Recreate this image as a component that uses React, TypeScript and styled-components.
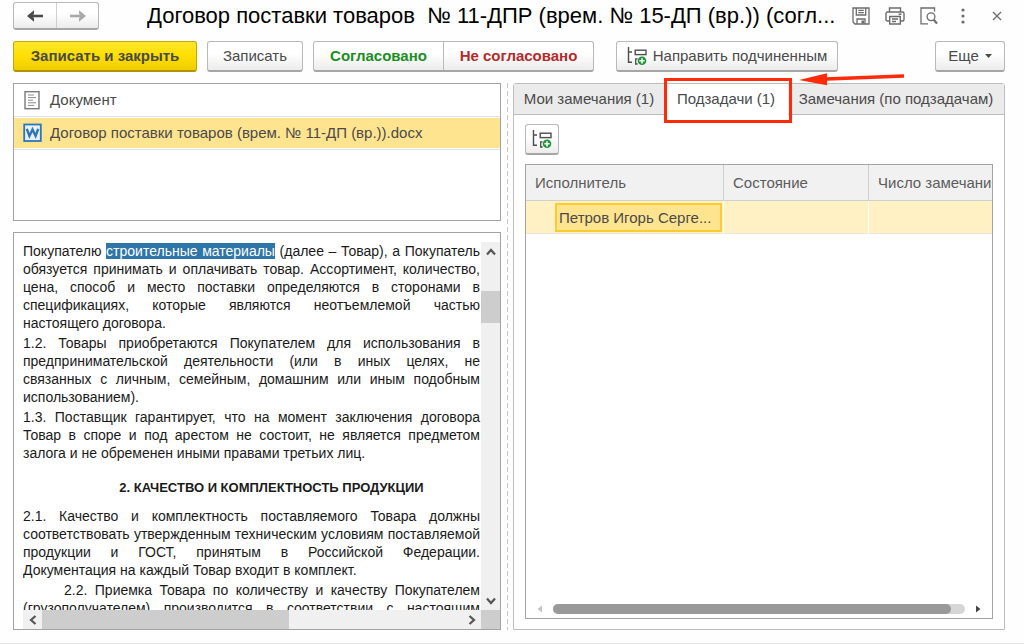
import React from "react";
import styled, { createGlobalStyle, css } from "styled-components";

const GlobalStyle = createGlobalStyle`
  *, *::before, *::after { box-sizing: border-box; }
  body { margin: 0; background: #fff; }
  button { font: inherit; color: inherit; margin: 0; padding: 0; }
`;

const Page = styled.main`
  display: flex;
  flex-direction: column;
  height: 100vh;
  border-bottom: 1px solid #e4e4e4;
  background: #fefefe;
  color: #4a4a4a;
  font-family: "Liberation Sans", Arial, sans-serif;
  font-size: 15px;
  line-height: 20px;
`;

const TitleBar = styled.header`
  display: flex;
  align-items: center;
  height: 34px;
  padding: 0 17px 2px 13px;
`;

const raised = css`
  border: 1px solid #b9b9b9;
  border-bottom: 2px solid #a6a6a6;
  border-radius: 3px;
  background: linear-gradient(#ffffff 40%, #ececec);
`;

const ButtonGroup = styled.div`
  display: flex;
  flex: none;
  ${raised}
`;

const NavButton = styled.button<{ $muted?: boolean }>`
  display: flex;
  align-items: center;
  justify-content: center;
  width: 42px;
  height: 25px;
  border: 0;
  background: none;
  color: ${(p) => (p.$muted ? "#a9a9a9" : "#4a4a4a")};
  & + & { border-left: 1px solid #cfcfcf; }
`;

const Title = styled.h1`
  flex: 1;
  min-width: 0;
  margin: 0 0 0 48px;
  overflow: hidden;
  color: #000;
  font-size: 22px;
  font-weight: 400;
  line-height: 30px;
  white-space: pre;
`;

const TitleTools = styled.div`
  display: flex;
  align-items: center;
  gap: 14px;
`;

const IconButton = styled.button`
  display: flex;
  align-items: center;
  justify-content: center;
  width: 20px;
  height: 20px;
  border: 0;
  background: none;
  color: #6c6c6c;
`;

const Toolbar = styled.div`
  display: flex;
  align-items: center;
  margin-top: 7px;
  padding: 0 19px 0 13px;
`;

const Button = styled.button<{ $width: number; $primary?: boolean; $before?: number }>`
  display: flex;
  flex: none;
  align-items: center;
  justify-content: center;
  gap: 6px;
  width: ${(p) => p.$width}px;
  height: 31px;
  margin-left: ${(p) => p.$before ?? 0}px;
  white-space: nowrap;
  ${raised}
  ${(p) =>
    p.$primary &&
    css`
      border-color: #c9a800;
      border-bottom-color: #b09400;
      background: linear-gradient(#ffe62e, #ffdf00 50%, #efcd00);
      font-weight: 700;
    `}
`;

const Verdicts = styled(ButtonGroup)`
  margin-left: 10px;
`;

const VerdictButton = styled.button<{ $tone: string; $width: number }>`
  width: ${(p) => p.$width}px;
  height: 28px;
  border: 0;
  background: none;
  color: ${(p) => p.$tone};
  font-weight: 700;
  & + & { border-left: 1px solid #b9b9b9; }
`;

const Spacer = styled.div`
  flex: 1;
`;

const Workspace = styled.div`
  display: grid;
  flex: 1;
  grid-template-columns: minmax(0, 488fr) 12px minmax(0, 492fr);
  min-height: 0;
  margin: 11px 19px 13px 13px;
`;

const LeftColumn = styled.div`
  display: flex;
  flex-direction: column;
  gap: 11px;
  min-height: 0;
`;

const Splitter = styled.div`
  justify-self: center;
  width: 1px;
  background: repeating-linear-gradient(#c8c8c8 0 5px, transparent 5px 8px);
`;

const Files = styled.ul`
  flex: none;
  height: 138px;
  margin: 0;
  padding: 0;
  border: 1px solid #a3a3a3;
  background: #fff;
  list-style: none;
`;

const FileRow = styled.li<{ $selected?: boolean }>`
  display: flex;
  align-items: center;
  gap: 7px;
  height: 33px;
  padding: 0 9px;
  border-bottom: 1px solid #e2e2e2;
  background: ${(p) => (p.$selected ? "#ffe48f" : "#fff")};
  box-shadow: inset 0 1px #fff, inset 0 -1px #fff;
`;

const FileIcon = styled.svg`
  flex: none;
  width: 20px;
  height: 20px;
`;

const Viewer = styled.section`
  display: grid;
  flex: 1;
  grid-template-columns: minmax(0, 1fr) 19px;
  grid-template-rows: minmax(0, 1fr) 19px;
  min-height: 0;
  padding: 9px 0 0 9px;
  border: 1px solid #a3a3a3;
  background: #fff;
`;

const DocText = styled.article`
  overflow: hidden;
  padding-right: 1px;
  color: #1a1a1a;
  font-size: 14px;
  line-height: 18px;
`;

const Paragraph = styled.p<{ $indent?: boolean }>`
  margin: 0 0 2px;
  text-align: justify;
  text-indent: ${(p) => (p.$indent ? 41 : 0)}px;
`;

const Line = styled.span`
  display: block;
  text-align-last: justify;
`;

const DocHeading = styled.h2`
  margin: 17px 0 10px;
  padding-left: 40px;
  font-size: 13px;
  line-height: 18px;
  text-align: center;
`;

const Mark = styled.mark`
  background: #2e75a8;
  color: #fff;
`;

const VTrack = styled.div`
  display: flex;
  flex-direction: column;
  background: #f0f0f0;
`;

const HTrack = styled.div`
  display: flex;
  background: #f0f0f0;
`;

const TrackButton = styled.button`
  display: flex;
  flex: none;
  align-items: center;
  justify-content: center;
  width: 19px;
  height: 19px;
  border: 0;
  background: none;
  color: #555;
`;

const VThumb = styled.div`
  height: 32px;
  margin-top: 30px;
  background: #cdcdcd;
`;

const HThumb = styled.div`
  flex: 0 0 54%;
  background: #cdcdcd;
`;

const Corner = styled.div`
  background: #cdcdcd;
`;

const Panel = styled.section`
  display: flex;
  flex-direction: column;
  min-height: 0;
  border: 1px solid #bdbdbd;
  border-radius: 3px 3px 0 0;
  background: #fff;
`;

const Tabs = styled.div`
  display: flex;
  flex: none;
  height: 31px;
`;

const Tab = styled.button<{ $active?: boolean; $width?: number }>`
  position: relative;
  flex: ${(p) => (p.$width ? `0 0 ${p.$width}px` : "1")};
  border: 0;
  border-bottom: 1px solid ${(p) => (p.$active ? "#fff" : "#bdbdbd")};
  background: ${(p) => (p.$active ? "#fff" : "#ebebeb")};
  white-space: nowrap;
`;

const Highlight = styled.span`
  position: absolute;
  inset: -6px -4px -9px 0;
  z-index: 1;
  border: 3px solid #ff2a0a;
  pointer-events: none;
`;

const Arrow = styled.svg`
  position: absolute;
  top: -13px;
  left: 134px;
  z-index: 1;
  width: 108px;
  height: 16px;
  pointer-events: none;
`;

const PanelBody = styled.div`
  display: flex;
  flex: 1;
  flex-direction: column;
  gap: 9px;
  min-height: 0;
  padding: 9px 11px 10px;
`;

const TableFrame = styled.div`
  display: flex;
  flex: 1;
  flex-direction: column;
  justify-content: space-between;
  min-height: 0;
  overflow: hidden;
  border: 1px solid #a3a3a3;
`;

const Table = styled.table`
  width: 100%;
  border-collapse: separate;
  border-spacing: 0;
  table-layout: fixed;
`;

const Th = styled.th`
  height: 36px;
  padding: 0 9px;
  overflow: hidden;
  border-bottom: 1px solid #cfcfcf;
  background: #f1f1f1;
  color: #5c5c5c;
  font-weight: 400;
  text-align: left;
  white-space: nowrap;
  & + & { border-left: 1px solid #cfcfcf; }
  &:last-child { padding-right: 0; }
`;

const Td = styled.td`
  height: 33px;
  padding: 1px 1px 1px 29px;
  border-bottom: 1px solid #e6e6e6;
  background: #fff1c4;
  & + & { border-left: 1px solid #fff; }
`;

const SelectedCell = styled.div`
  height: 29px;
  padding: 3px 2px;
  overflow: hidden;
  border: 2px solid #fbcb2f;
  background: #ffe48f;
  white-space: nowrap;
`;

const SlimScroll = styled.div`
  display: flex;
  align-items: center;
  gap: 10px;
  padding: 0 11px 4px;
`;

const SlimButton = styled.button<{ $muted?: boolean }>`
  display: flex;
  border: 0;
  background: none;
  color: ${(p) => (p.$muted ? "#c4c4c4" : "#444")};
`;

const SlimTrack = styled.div`
  flex: 1;
  height: 10px;
  padding-right: 14px;
  border-radius: 5px;
  background: #d6d6d6;
`;

const SlimThumb = styled.div`
  height: 10px;
  border-radius: 5px;
  background: #999;
`;

const NavArrow = ({ flip }: { flip?: boolean }) => (
  <svg width="18" height="14" viewBox="0 0 18 14" aria-hidden="true">
    <g transform={flip ? "translate(18 0) scale(-1 1)" : undefined}>
      <path d="M6 7H17" stroke="currentColor" strokeWidth="2.6" />
      <path d="M1 7L8 1.2V4.6L6.4 7L8 9.4V12.8Z" fill="currentColor" />
    </g>
  </svg>
);

const TreeAddIcon = () => (
  <svg width="20" height="19" viewBox="0 0 20 19" fill="none" aria-hidden="true">
    <path d="M1.5 0V15.2H5M1.5 5H5" stroke="#4d4d4d" strokeWidth="1.4" />
    <rect x="8.2" y="3.2" width="10.8" height="4.4" stroke="#4d4d4d" strokeWidth="1.4" />
    <path d="M10.6 11.9H8.7V17H10.6" stroke="#4d4d4d" strokeWidth="1.3" />
    <circle cx="15" cy="13.8" r="4.3" fill="#23963a" />
    <path d="M12.4 13.8H17.6M15 11.2V16.4" stroke="#fff" strokeWidth="1.5" />
  </svg>
);

const Chevron = ({ d }: { d: string }) => (
  <svg width="10" height="10" viewBox="0 0 10 10" fill="none" stroke="currentColor" strokeWidth="2.2" aria-hidden="true">
    <path d={d} />
  </svg>
);

const SaveIcon = () => (
  <svg width="18" height="18" viewBox="0 0 18 18" fill="none" stroke="currentColor" strokeWidth="1.3" aria-hidden="true">
    <path d="M1 1H17V17H3L1 15Z" />
    <path d="M4.3 1V8H13.7V1M6.3 3.4H11.8M6.3 5.6H11.8M5 17V12H13V17" />
    <path d="M9.5 13.5H12V16.5H9.5Z" fill="currentColor" stroke="none" />
  </svg>
);

const PrintIcon = () => (
  <svg width="20" height="18" viewBox="0 0 20 18" fill="none" stroke="currentColor" strokeWidth="1.4" aria-hidden="true">
    <path d="M4.5 4.5V1H15.5V4.5M4.5 14H2.5Q1 14 1 12.5V6.5Q1 5 2.5 5H17.5Q19 5 19 6.5V12.5Q19 14 17.5 14H15.5" />
    <path d="M4.7 9.5H15.3V17H4.7ZM7 12H13M7 14.5H11M13.6 7.2H16.4" />
  </svg>
);

const PreviewIcon = () => (
  <svg width="18" height="18" viewBox="0 0 18 18" fill="none" stroke="currentColor" strokeWidth="1.3" aria-hidden="true">
    <path d="M8 16.9H1V1H14.5V4.5" />
    <circle cx="11" cy="9.8" r="3.9" />
    <path d="M13.8 12.8L17 16.6" strokeWidth="2.2" />
  </svg>
);

export default function App() {
  return (
    <>
      <GlobalStyle />
      <Page>
        <TitleBar>
          <ButtonGroup>
            <NavButton aria-label="Назад"><NavArrow /></NavButton>
            <NavButton aria-label="Вперед" $muted><NavArrow flip /></NavButton>
          </ButtonGroup>
          <Title>{"Договор поставки товаров  № 11-ДПР (врем. № 15-ДП (вр.)) (согл..."}</Title>
          <TitleTools>
            <IconButton aria-label="Сохранить"><SaveIcon /></IconButton>
            <IconButton aria-label="Печать"><PrintIcon /></IconButton>
            <IconButton aria-label="Просмотр"><PreviewIcon /></IconButton>
            <IconButton aria-label="Действия">
              <svg width="4" height="16" viewBox="0 0 4 16" fill="currentColor" aria-hidden="true">
                <circle cx="2" cy="2" r="1.6" /><circle cx="2" cy="8" r="1.6" /><circle cx="2" cy="14" r="1.6" />
              </svg>
            </IconButton>
            <IconButton aria-label="Закрыть">
              <svg width="10" height="10" viewBox="0 0 10 10" stroke="currentColor" strokeWidth="1.3" aria-hidden="true">
                <path d="M1 1L9 9M9 1L1 9" />
              </svg>
            </IconButton>
          </TitleTools>
        </TitleBar>

        <Toolbar>
          <Button $width={184} $primary>Записать и закрыть</Button>
          <Button $width={96} $before={10}>Записать</Button>
          <Verdicts>
            <VerdictButton $width={129} $tone="#1c8f24">Согласовано</VerdictButton>
            <VerdictButton $width={150} $tone="#b52a2a">Не согласовано</VerdictButton>
          </Verdicts>
          <Button $width={222} $before={22}><TreeAddIcon />Направить подчиненным</Button>
          <Spacer />
          <Button $width={70}>
            Еще
            <svg width="7" height="4" viewBox="0 0 7 4" aria-hidden="true"><path d="M0 0H7L3.5 4Z" fill="#4a4a4a" /></svg>
          </Button>
        </Toolbar>

        <Workspace>
          <LeftColumn>
            <Files>
              <FileRow>
                <FileIcon viewBox="0 0 20 20" fill="none" aria-hidden="true">
                  <rect x="2" y="1.7" width="14" height="17" stroke="#7a7a7a" strokeWidth="1.4" />
                  <path d="M5 5H11M5 7.6H13M5 10.2H10M5 12.8H13M5 15.4H11" stroke="#8c8c8c" />
                </FileIcon>
                Документ
              </FileRow>
              <FileRow $selected>
                <FileIcon viewBox="0 0 20 20" fill="none" aria-hidden="true">
                  <rect x="1.2" y="1.5" width="16.6" height="16.5" fill="#e8f1fa" stroke="#2f76b8" strokeWidth="1.8" />
                  <path d="M3.8 5.8L6.4 13L9.5 6.5L12.6 13L15.2 5.8" stroke="#2f76b8" strokeWidth="2.4" />
                </FileIcon>
                Договор поставки товаров (врем. № 11-ДП (вр.)).docx
              </FileRow>
            </Files>

            <Viewer>
              <DocText>
                <Paragraph>
                  Покупателю <Mark>строительные материалы</Mark> (далее – Товар), а Покупатель обязуется принимать и
                  оплачивать товар. Ассортимент, количество, цена, способ и место поставки определяются в сторонами в
                  спецификациях, которые являются неотъемлемой частью настоящего договора.
                </Paragraph>
                <Paragraph>
                  <Line>1.2. Товары приобретаются Покупателем для использования в</Line>
                  <Line>предпринимательской деятельности (или в иных целях, не</Line>
                  связанных с личным, семейным, домашним или иным подобным использованием).
                </Paragraph>
                <Paragraph>
                  1.3. Поставщик гарантирует, что на момент заключения договора Товар в споре и под арестом не состоит,
                  не является предметом залога и не обременен иными правами третьих лиц.
                </Paragraph>
                <DocHeading>2. КАЧЕСТВО И КОМПЛЕКТНОСТЬ ПРОДУКЦИИ</DocHeading>
                <Paragraph>
                  2.1. Качество и комплектность поставляемого Товара должны соответствовать утвержденным техническим
                  условиям поставляемой продукции и ГОСТ, принятым в Российской Федерации. Документация на каждый
                  Товар входит в комплект.
                </Paragraph>
                <Paragraph $indent>
                  2.2. Приемка Товара по количеству и качеству Покупателем (грузополучателем) производится в
                  соответствии с настоящим договором.
                </Paragraph>
              </DocText>
              <VTrack>
                <TrackButton aria-label="Вверх"><Chevron d="M1 7.5L5 3L9 7.5" /></TrackButton>
                <VThumb />
                <Spacer />
                <TrackButton aria-label="Вниз"><Chevron d="M1 2.5L5 7L9 2.5" /></TrackButton>
              </VTrack>
              <HTrack>
                <TrackButton aria-label="Влево"><Chevron d="M7.5 1L3 5L7.5 9" /></TrackButton>
                <HThumb />
                <Spacer />
                <TrackButton aria-label="Вправо"><Chevron d="M2.5 1L7 5L2.5 9" /></TrackButton>
              </HTrack>
              <Corner />
            </Viewer>
          </LeftColumn>

          <Splitter />

          <Panel>
            <Tabs role="tablist">
              <Tab role="tab" $width={150}>Мои замечания (1)</Tab>
              <Tab role="tab" aria-selected $active $width={124}>
                Подзадачи (1)
                <Highlight />
                <Arrow viewBox="0 0 108 16" aria-hidden="true">
                  <path d="M28 8L106 5" stroke="#ff2a0a" strokeWidth="3.4" />
                  <path d="M1 9L29 2.2V14.2Z" fill="#ff2a0a" />
                </Arrow>
              </Tab>
              <Tab role="tab">Замечания (по подзадачам)</Tab>
            </Tabs>
            <PanelBody>
              <Button $width={34} aria-label="Добавить подзадачу"><TreeAddIcon /></Button>
              <TableFrame>
                <Table>
                  <colgroup>
                    <col width="197" />
                    <col width="145" />
                    <col />
                  </colgroup>
                  <thead>
                    <tr><Th>Исполнитель</Th><Th>Состояние</Th><Th>Число замечаний</Th></tr>
                  </thead>
                  <tbody>
                    <tr><Td><SelectedCell>Петров Игорь Серге...</SelectedCell></Td><Td /><Td /></tr>
                  </tbody>
                </Table>
                <SlimScroll>
                  <SlimButton aria-label="Прокрутить влево" $muted>
                    <svg width="6" height="8" viewBox="0 0 6 8" aria-hidden="true"><path d="M5 0.5V7.5L0.5 4Z" fill="currentColor" /></svg>
                  </SlimButton>
                  <SlimTrack><SlimThumb /></SlimTrack>
                  <SlimButton aria-label="Прокрутить вправо">
                    <svg width="6" height="8" viewBox="0 0 6 8" aria-hidden="true"><path d="M1 0.5V7.5L5.5 4Z" fill="currentColor" /></svg>
                  </SlimButton>
                </SlimScroll>
              </TableFrame>
            </PanelBody>
          </Panel>
        </Workspace>
      </Page>
    </>
  );
}
